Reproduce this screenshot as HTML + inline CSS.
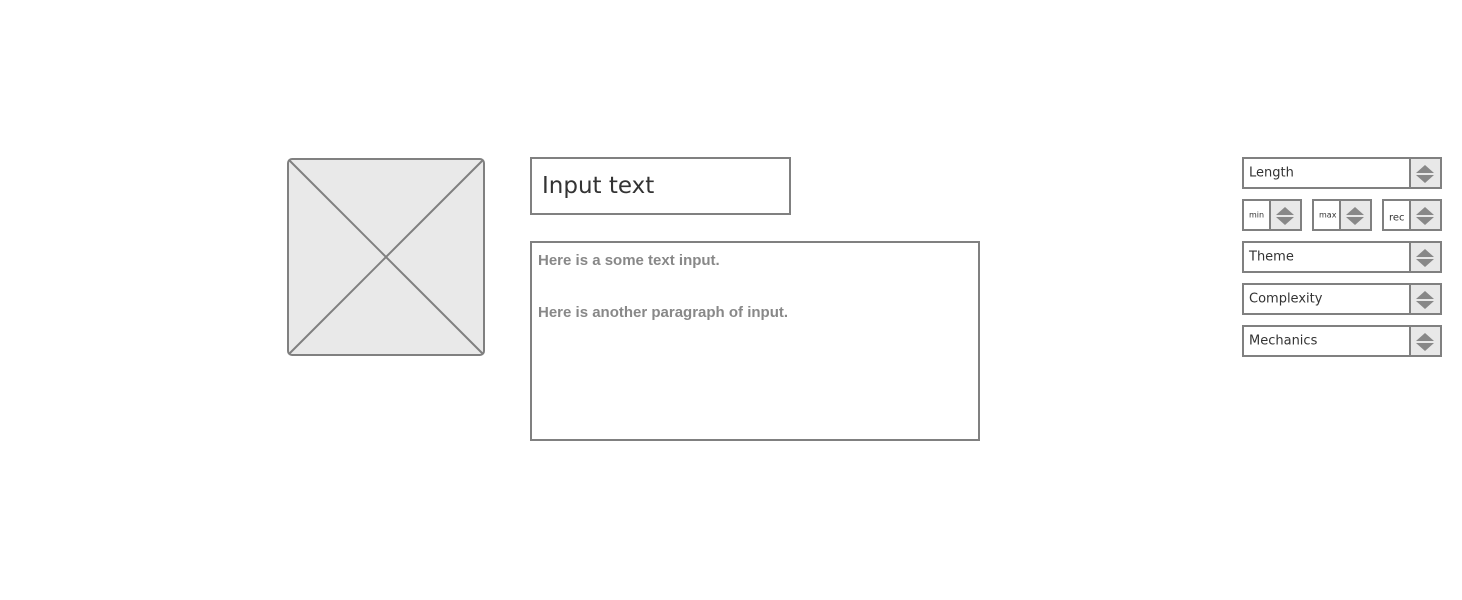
<!DOCTYPE html><html><head><style>
body{margin:0;width:1462px;height:600px;background:#fff;position:relative;font-family:"DejaVu Sans","Liberation Sans",sans-serif;overflow:hidden}
.a{position:absolute;box-sizing:border-box;border:2px solid #808080}
.sp .b{position:absolute;right:0;top:0;bottom:0;width:29px;background:#e8e8e8;border-left:2px solid #808080}
.sp .b svg{position:absolute;left:4px;top:4px}
.sp span{position:absolute;left:5px;top:50%;transform:translateY(-50%);color:#333;font-size:13px}
</style></head><body>
<svg style="position:absolute;left:287px;top:158px" width="198" height="198"><rect x="1" y="1" width="196" height="196" rx="4" fill="#e9e9e9" stroke="#808080" stroke-width="2"/><line x1="2" y1="2" x2="196" y2="196" stroke="#808080" stroke-width="2"/><line x1="196" y1="2" x2="2" y2="196" stroke="#808080" stroke-width="2"/></svg>
<div class="a" style="left:530px;top:157px;width:261px;height:58px"><span style="position:absolute;left:10px;top:14px;font-size:23px;color:#333">Input text</span></div>
<div class="a" style="left:530px;top:241px;width:450px;height:200px;color:#888;font-size:15px;font-weight:bold;font-family:'Liberation Sans',sans-serif"><div style="position:absolute;left:6px;top:9px">Here is a some text input.</div><div style="position:absolute;left:6px;top:61px">Here is another paragraph of input.</div></div>
<div class="a sp" style="left:1242px;top:157px;width:200px;height:32px"><span>Length</span><div class="b"><svg width="20" height="22"><path d="M10 2L19 10H1Z M10 20L19 12H1Z" fill="#888"/></svg></div></div>
<div class="a sp" style="left:1242px;top:199px;width:60px;height:32px"><span style="font-size:8px">min</span><div class="b"><svg width="20" height="22"><path d="M10 2L19 10H1Z M10 20L19 12H1Z" fill="#888"/></svg></div></div>
<div class="a sp" style="left:1312px;top:199px;width:60px;height:32px"><span style="font-size:8px">max</span><div class="b"><svg width="20" height="22"><path d="M10 2L19 10H1Z M10 20L19 12H1Z" fill="#888"/></svg></div></div>
<div class="a sp" style="left:1382px;top:199px;width:60px;height:32px"><span style="font-size:10px;top:60%">rec</span><div class="b"><svg width="20" height="22"><path d="M10 2L19 10H1Z M10 20L19 12H1Z" fill="#888"/></svg></div></div>
<div class="a sp" style="left:1242px;top:241px;width:200px;height:32px"><span>Theme</span><div class="b"><svg width="20" height="22"><path d="M10 2L19 10H1Z M10 20L19 12H1Z" fill="#888"/></svg></div></div>
<div class="a sp" style="left:1242px;top:283px;width:200px;height:32px"><span>Complexity</span><div class="b"><svg width="20" height="22"><path d="M10 2L19 10H1Z M10 20L19 12H1Z" fill="#888"/></svg></div></div>
<div class="a sp" style="left:1242px;top:325px;width:200px;height:32px"><span>Mechanics</span><div class="b"><svg width="20" height="22"><path d="M10 2L19 10H1Z M10 20L19 12H1Z" fill="#888"/></svg></div></div>
</body></html>
